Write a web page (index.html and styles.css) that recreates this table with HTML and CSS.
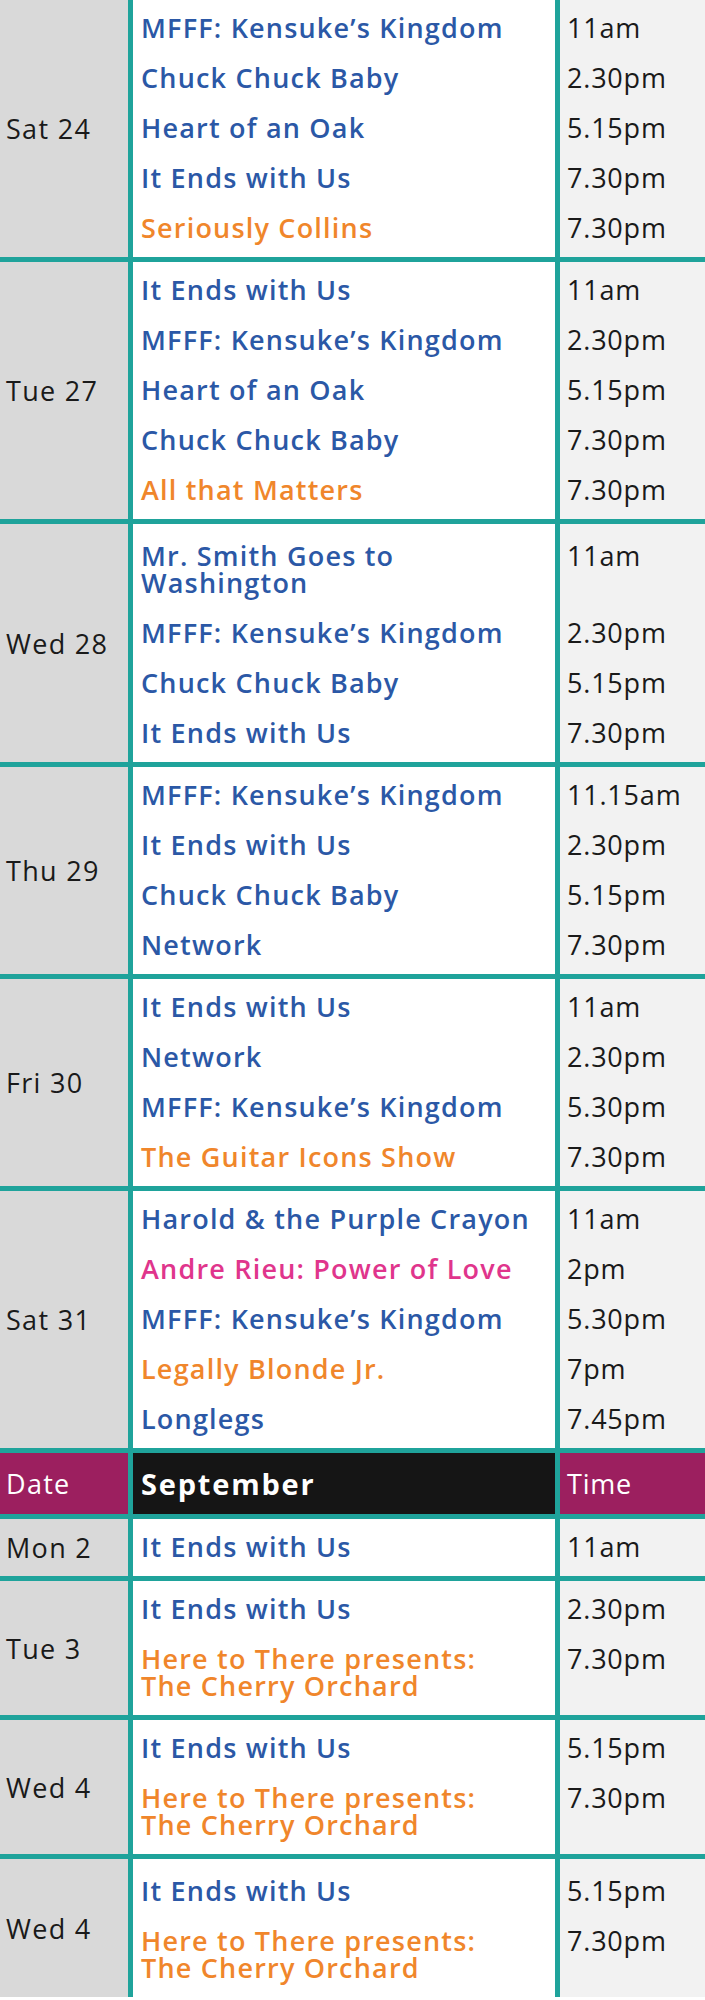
FILE: index.html
```html
<!DOCTYPE html>
<html lang="en">
<head>
<meta charset="utf-8">
<title>Screening schedule</title>
<link rel="stylesheet" href="styles.css">
</head>
<body>
<div class="schedule">

  <section class="day day--top">
    <div class="date">Sat 24</div>
    <div class="shows">
      <div class="show"><span class="title blue">MFFF: Kensuke’s Kingdom</span><span class="time">11am</span></div>
      <div class="show"><span class="title blue">Chuck Chuck Baby</span><span class="time">2.30pm</span></div>
      <div class="show"><span class="title blue">Heart of an Oak</span><span class="time">5.15pm</span></div>
      <div class="show"><span class="title blue">It Ends with Us</span><span class="time">7.30pm</span></div>
      <div class="show"><span class="title orange">Seriously Collins</span><span class="time">7.30pm</span></div>
    </div>
  </section>

  <section class="day">
    <div class="date">Tue 27</div>
    <div class="shows">
      <div class="show"><span class="title blue">It Ends with Us</span><span class="time">11am</span></div>
      <div class="show"><span class="title blue">MFFF: Kensuke’s Kingdom</span><span class="time">2.30pm</span></div>
      <div class="show"><span class="title blue">Heart of an Oak</span><span class="time">5.15pm</span></div>
      <div class="show"><span class="title blue">Chuck Chuck Baby</span><span class="time">7.30pm</span></div>
      <div class="show"><span class="title orange">All that Matters</span><span class="time">7.30pm</span></div>
    </div>
  </section>

  <section class="day day--loose">
    <div class="date">Wed 28</div>
    <div class="shows">
      <div class="show"><span class="title blue wrap">Mr. Smith Goes to<br>Washington</span><span class="time">11am</span></div>
      <div class="show"><span class="title blue">MFFF: Kensuke’s Kingdom</span><span class="time">2.30pm</span></div>
      <div class="show"><span class="title blue">Chuck Chuck Baby</span><span class="time">5.15pm</span></div>
      <div class="show"><span class="title blue">It Ends with Us</span><span class="time">7.30pm</span></div>
    </div>
  </section>

  <section class="day">
    <div class="date">Thu 29</div>
    <div class="shows">
      <div class="show"><span class="title blue">MFFF: Kensuke’s Kingdom</span><span class="time">11.15am</span></div>
      <div class="show"><span class="title blue">It Ends with Us</span><span class="time">2.30pm</span></div>
      <div class="show"><span class="title blue">Chuck Chuck Baby</span><span class="time">5.15pm</span></div>
      <div class="show"><span class="title blue">Network</span><span class="time">7.30pm</span></div>
    </div>
  </section>

  <section class="day">
    <div class="date">Fri 30</div>
    <div class="shows">
      <div class="show"><span class="title blue">It Ends with Us</span><span class="time">11am</span></div>
      <div class="show"><span class="title blue">Network</span><span class="time">2.30pm</span></div>
      <div class="show"><span class="title blue">MFFF: Kensuke’s Kingdom</span><span class="time">5.30pm</span></div>
      <div class="show"><span class="title orange">The Guitar Icons Show</span><span class="time">7.30pm</span></div>
    </div>
  </section>

  <section class="day">
    <div class="date">Sat 31</div>
    <div class="shows">
      <div class="show"><span class="title blue">Harold &amp; the Purple Crayon</span><span class="time">11am</span></div>
      <div class="show"><span class="title pink">Andre Rieu: Power of Love</span><span class="time">2pm</span></div>
      <div class="show"><span class="title blue">MFFF: Kensuke’s Kingdom</span><span class="time">5.30pm</span></div>
      <div class="show"><span class="title orange">Legally Blonde Jr.</span><span class="time">7pm</span></div>
      <div class="show"><span class="title blue">Longlegs</span><span class="time">7.45pm</span></div>
    </div>
  </section>

  <section class="day day--head">
    <div class="date">Date</div>
    <div class="shows">
      <div class="show"><span class="title month">September</span><span class="time">Time</span></div>
    </div>
  </section>

  <section class="day">
    <div class="date">Mon 2</div>
    <div class="shows">
      <div class="show"><span class="title blue">It Ends with Us</span><span class="time">11am</span></div>
    </div>
  </section>

  <section class="day">
    <div class="date">Tue 3</div>
    <div class="shows">
      <div class="show"><span class="title blue">It Ends with Us</span><span class="time">2.30pm</span></div>
      <div class="show"><span class="title orange wrap">Here to There presents:<br>The Cherry Orchard</span><span class="time">7.30pm</span></div>
    </div>
  </section>

  <section class="day">
    <div class="date">Wed 4</div>
    <div class="shows">
      <div class="show"><span class="title blue">It Ends with Us</span><span class="time">5.15pm</span></div>
      <div class="show"><span class="title orange wrap">Here to There presents:<br>The Cherry Orchard</span><span class="time">7.30pm</span></div>
    </div>
  </section>

  <section class="day day--loose">
    <div class="date">Wed 4</div>
    <div class="shows">
      <div class="show"><span class="title blue">It Ends with Us</span><span class="time">5.15pm</span></div>
      <div class="show"><span class="title orange wrap">Here to There presents:<br>The Cherry Orchard</span><span class="time">7.30pm</span></div>
    </div>
  </section>

</div>
</body>
</html>
```

FILE: styles.css
```css
html, body {
  margin: 0;
  padding: 0;
  background: #ffffff;
}

.schedule {
  width: 705px;
  display: flex;
  flex-direction: column;
  gap: 5px;
  background: #1fa39b;
  font-family: "Open Sans", "Liberation Sans", sans-serif;
}

.day {
  display: flex;
  align-items: stretch;
}

.date {
  width: 122px;
  flex: none;
  padding-left: 6px;
  display: flex;
  align-items: center;
  background: #d9d9d9;
  color: #1a1a1a;
  font-size: 27px;
  font-weight: 400;
  letter-spacing: 1.3px;
}

.shows {
  flex: 1;
  margin-left: 5px;
  padding: 3px 0 4px;
  background: linear-gradient(to right, #ffffff 0 422px, #1fa39b 422px 427px, #f2f2f2 427px);
}

.day--loose .shows {
  padding-top: 7px;
}

.show {
  display: grid;
  grid-template-columns: 422px 1fr;
  column-gap: 5px;
  align-items: start;
  padding: 11px 0 12px;
}

.title {
  padding-left: 8px;
  font-size: 27px;
  line-height: 27px;
  font-weight: 600;
  letter-spacing: 1.2px;
  white-space: nowrap;
}

.time {
  padding-left: 7px;
  font-size: 27px;
  line-height: 27px;
  font-weight: 400;
  color: #1a1a1a;
  letter-spacing: 0.8px;
}

.blue { color: #2b58a6; }
.orange { color: #f0862b; }
.pink { color: #e0358c; }

.day--head .date {
  background: #9c1f5f;
  color: #ffffff;
}

.day--head .shows {
  padding: 6px 0 5px;
  background: linear-gradient(to right, #151515 0 422px, #1fa39b 422px 427px, #9c1f5f 427px);
}

.day--head .time {
  color: #ffffff;
}

.month {
  color: #ffffff;
  font-weight: 700;
  font-size: 29px;
  letter-spacing: 1.8px;
}
```
